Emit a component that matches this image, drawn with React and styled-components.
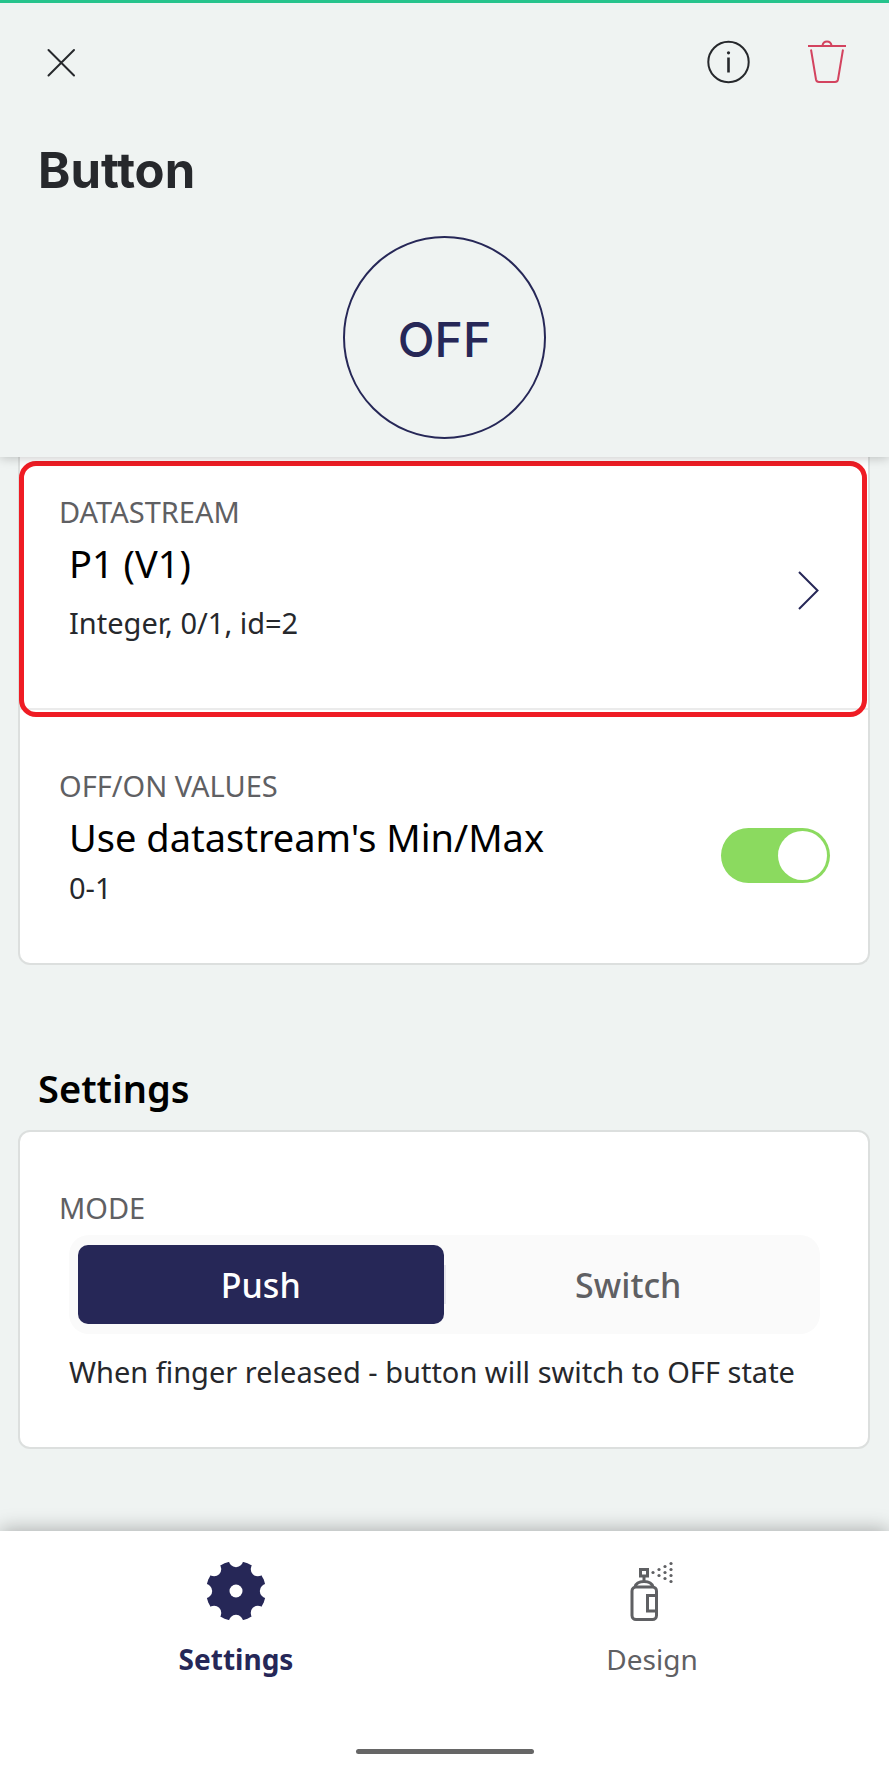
import React, { useState } from "react";
import styled, { createGlobalStyle } from "styled-components";

const ink = "#26282c";
const navy = "#262757";
const grey = "#5f6063";
const line = "#dcdfde";
const canvas = "#eff3f2";

const GlobalStyle = createGlobalStyle`
  *, *::before, *::after { box-sizing: border-box; }
  body {
    margin: 0;
    background: ${canvas};
    font-family: "Noto Sans", "Open Sans", sans-serif;
    color: ${ink};
  }
  h1, h2, p { margin: 0; }
  button {
    margin: 0;
    padding: 0;
    border: 0;
    background: none;
    font: inherit;
    color: inherit;
    cursor: pointer;
  }
  svg { display: block; }
`;

const Screen = styled.div`
  display: flex;
  flex-direction: column;
  min-height: 100vh;
`;

const Header = styled.header`
  position: relative;
  z-index: 1;
  padding-bottom: 18px;
  border-top: 3px solid #26c38c;
  background: ${canvas};
  box-shadow: 0 1px 10px rgba(0, 0, 0, 0.22);
`;

const Toolbar = styled.div`
  display: flex;
  align-items: center;
  gap: 58px;
  padding: 37px 43px 0 47px;
`;

const IconButton = styled.button`
  flex: none;
  margin-right: ${(p) => (p.$push ? "auto" : "0")};
  color: ${(p) => p.$color || ink};
`;

const Title = styled.h1`
  padding: 57px 38px 0;
  font: 700 49px/60px Inter, sans-serif;
  font-variant-ligatures: none;
`;

const Preview = styled.div`
  display: flex;
  justify-content: center;
  padding-top: 35px;
`;

const RoundButton = styled.button`
  width: 203px;
  height: 203px;
  padding-top: 4px;
  border: 2px solid ${navy};
  border-radius: 50%;
  color: ${navy};
  font: 500 48px/60px Inter, sans-serif;
`;

const Main = styled.main`
  flex: 1;
  padding: 0 19px 82px 18px;
`;

const Card = styled.section`
  border: 2px solid ${line};
  border-top-width: ${(p) => (p.$joined ? "0" : "2px")};
  border-radius: ${(p) => (p.$joined ? "0 0 12px 12px" : "12px")};
  background: #fff;
`;

const Row = styled.div`
  position: relative;
  display: flex;
  align-items: center;
  justify-content: space-between;
  padding: ${(p) => (p.$first ? "37px 49px 67px 39px" : "58px 38px 57px 39px")};
  border-bottom: ${(p) => (p.$first ? "2px solid #ebebeb" : "0")};
`;

const RowButton = styled(IconButton)`
  margin-top: 46px;
`;

const Highlight = styled.div`
  position: absolute;
  inset: 4px 1px -9px -1px;
  border: 5px solid #ef1c24;
  border-radius: 17px;
  pointer-events: none;
`;

const Label = styled.p`
  color: ${grey};
  font-size: 29px;
  line-height: 36px;
`;

const Value = styled.p`
  display: block;
  padding: 9px 0 0 10px;
  color: #000;
  font-size: 38px;
  line-height: 48px;
`;

const Note = styled.p`
  padding: ${(p) => p.$gap}px 0 0 10px;
  font-size: 29px;
  line-height: 36px;
`;

const Toggle = styled.input`
  appearance: none;
  flex: none;
  width: 109px;
  height: 55px;
  margin: 36px 0 0;
  padding: 3px;
  border-radius: 28px;
  background: ${(p) => (p.checked ? "#8bda5f" : "#c8cccb")};
  cursor: pointer;

  &::before {
    content: "";
    display: block;
    width: 49px;
    height: 49px;
    margin-left: ${(p) => (p.checked ? "auto" : "0")};
    border-radius: 50%;
    background: #fff;
  }
`;

const Heading = styled.h2`
  padding: 99px 20px 18px;
  color: #000;
  font-size: 38px;
  font-weight: 600;
  line-height: 48px;
`;

const ModeBody = styled.div`
  padding: 58px 48px 57px 39px;
`;

const Segmented = styled.div`
  display: grid;
  grid-template-columns: 1fr 2px 1fr;
  align-items: center;
  margin: 9px 0 0 10px;
  padding: 10px 9px;
  border-radius: 20px;
  background: #fafafa;
`;

const Segment = styled.button`
  height: 79px;
  border-radius: 10px;
  background: ${(p) => (p.$active ? navy : "transparent")};
  color: ${(p) => (p.$active ? "#fff" : grey)};
  font-size: 34px;
  font-weight: 500;
`;

const Separator = styled.span`
  height: 39px;
  background: #e6e6ec;
`;

const Nav = styled.nav`
  background: #fff;
  box-shadow: 0 -2px 18px rgba(0, 0, 0, 0.28);
`;

const NavItems = styled.div`
  display: grid;
  grid-template-columns: 1fr 1fr;
  padding: 30px 29px 0 28px;
`;

const NavItem = styled.a`
  display: flex;
  flex-direction: column;
  align-items: center;
  gap: 20px;
  color: ${(p) => (p.$active ? navy : grey)};
  font-size: 28px;
  font-weight: ${(p) => (p.$active ? 700 : 400)};
  line-height: 36px;
  text-decoration: none;
`;

const NavFooter = styled.div`
  display: flex;
  justify-content: center;
  padding: 72px 0 15px;
`;

const HomeBar = styled.div`
  width: 178px;
  height: 5px;
  border-radius: 3px;
  background: #666;
`;

const CloseIcon = () => (
  <svg width="29" height="29" viewBox="0 0 29 29" fill="none" stroke="currentColor" strokeWidth="2" strokeLinecap="round">
    <path d="M1.500 2 27 27.500M27 2 1.500 27.500" />
  </svg>
);

const InfoIcon = () => (
  <svg width="44" height="44" viewBox="0 0 44 44" fill="none" stroke="currentColor">
    <circle cx="22.500" cy="22" r="20.200" strokeWidth="2" />
    <path d="M22.500 17.500V32.500" strokeWidth="2.600" />
    <circle cx="22.500" cy="12.800" r="1.600" fill="currentColor" stroke="none" />
  </svg>
);

const TrashIcon = () => (
  <svg width="38" height="44" viewBox="0 0 38 44" fill="none" stroke="currentColor" strokeWidth="2">
    <path d="M0 6H38M14.500 5.500C15 2.500 16.500 1.500 19 1.500S23 2.500 23.500 5.500" />
    <path d="M3 9.500 8 39.500Q8.500 42 11 42H27Q29.500 42 30 39.500L35 9.500" />
  </svg>
);

const ChevronIcon = () => (
  <svg width="21" height="39" viewBox="0 0 21 39" fill="none" stroke="currentColor" strokeWidth="2">
    <path d="M1 1 19.500 19.500 1 38" />
  </svg>
);

const GearIcon = () => (
  <svg width="60" height="60" viewBox="0 0 60 60">
    <mask id="gear-teeth">
      <rect width="60" height="60" fill="#fff" />
      <circle cx="30" cy="30" r="6.500" />
      {[0, 45, 90, 135, 180, 225, 270, 315].map((a) => (
        <circle key={a} cx="30" cy="-1" r="7.200" transform={`rotate(${a} 30 30)`} />
      ))}
    </mask>
    <circle cx="30" cy="30" r="30" fill="currentColor" mask="url(#gear-teeth)" />
  </svg>
);

const sprayDots = [
  [42, 11.5], [48, 8.5], [48, 14.5], [54, 5.5], [54, 11.5], [54, 17.5],
  [60, 2.5], [60, 8.5], [60, 14.5], [60, 20.5],
];

const SprayIcon = () => (
  <svg width="60" height="60" viewBox="11 0 60 60" fill="none" stroke="currentColor" strokeWidth="3">
    <rect x="29.500" y="8.500" width="7" height="6.500" />
    <path d="M33 15V21M24 26C25 22 28 20.500 33 20.500S41 22 42 26" />
    <rect x="21" y="26" width="24.500" height="32.500" rx="4" />
    <path d="M45 34.500H36.500V50H45" />
    {sprayDots.map(([x, y]) => (
      <circle key={`${x}-${y}`} cx={x} cy={y} r="1.600" fill="currentColor" stroke="none" />
    ))}
  </svg>
);

export default function App() {
  const [useRange, setUseRange] = useState(true);
  const [mode, setMode] = useState("Push");

  return (
    <Screen>
      <GlobalStyle />
      <Header>
        <Toolbar>
          <IconButton $push aria-label="Close"><CloseIcon /></IconButton>
          <IconButton aria-label="Info"><InfoIcon /></IconButton>
          <IconButton $color="#d3435f" aria-label="Delete"><TrashIcon /></IconButton>
        </Toolbar>
        <Title>Button</Title>
        <Preview><RoundButton>OFF</RoundButton></Preview>
      </Header>

      <Main>
        <Card $joined>
          <Row $first>
            <div>
              <Label>DATASTREAM</Label>
              <Value>P1 (V1)</Value>
              <Note $gap={18}>Integer, 0/1, id=2</Note>
            </div>
            <RowButton $color={navy} aria-label="Choose datastream"><ChevronIcon /></RowButton>
            <Highlight />
          </Row>
          <Row>
            <div>
              <Label>OFF/ON VALUES</Label>
              <Value as="label" htmlFor="use-range">Use datastream's Min/Max</Value>
              <Note $gap={9}>0-1</Note>
            </div>
            <Toggle
              id="use-range"
              type="checkbox"
              role="switch"
              checked={useRange}
              onChange={(e) => setUseRange(e.target.checked)}
            />
          </Row>
        </Card>

        <Heading>Settings</Heading>
        <Card>
          <ModeBody>
            <Label id="mode-label">MODE</Label>
            <Segmented role="group" aria-labelledby="mode-label">
              <Segment $active={mode === "Push"} aria-pressed={mode === "Push"} onClick={() => setMode("Push")}>
                Push
              </Segment>
              <Separator />
              <Segment $active={mode === "Switch"} aria-pressed={mode === "Switch"} onClick={() => setMode("Switch")}>
                Switch
              </Segment>
            </Segmented>
            <Note $gap={20}>When finger released - button will switch to OFF state</Note>
          </ModeBody>
        </Card>
      </Main>

      <Nav>
        <NavItems>
          <NavItem $active href="#settings"><GearIcon />Settings</NavItem>
          <NavItem href="#design"><SprayIcon />Design</NavItem>
        </NavItems>
        <NavFooter><HomeBar /></NavFooter>
      </Nav>
    </Screen>
  );
}
